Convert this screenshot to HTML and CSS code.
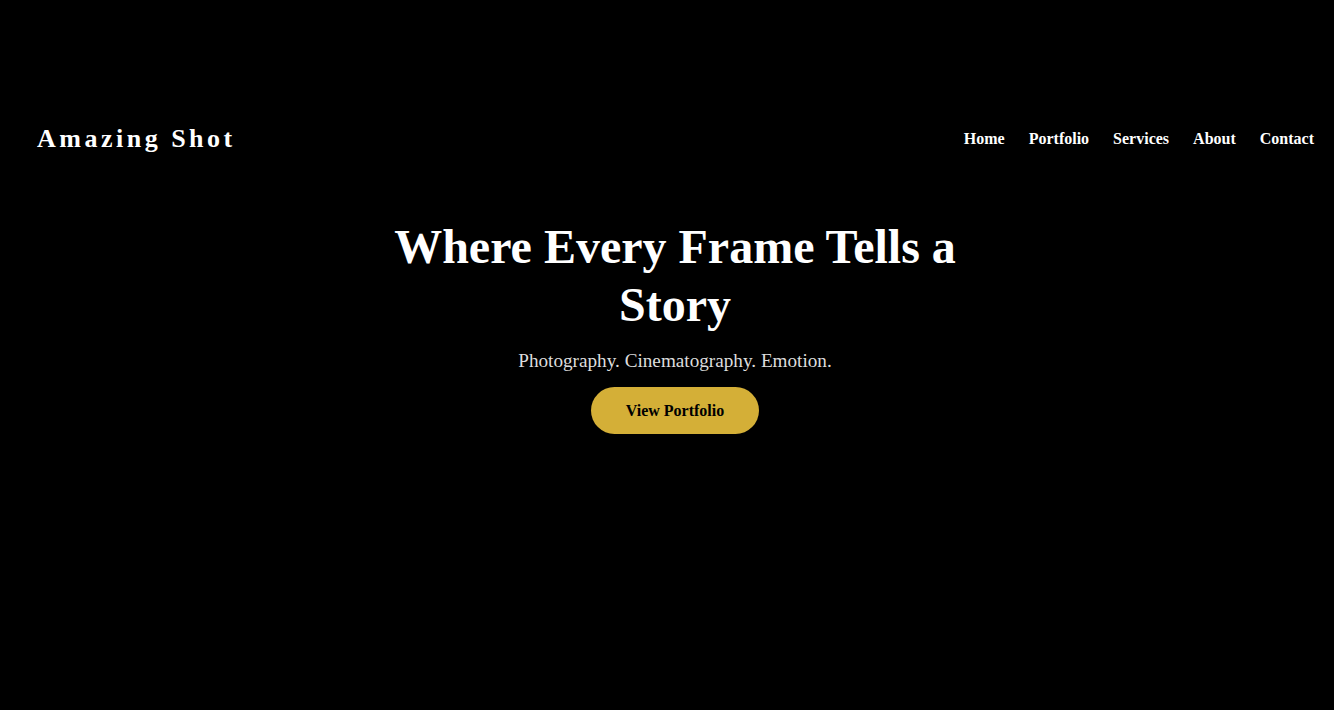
FILE: index.html
```html
<!DOCTYPE html>
<html lang="en">
<head>
<meta charset="utf-8">
<title>Amazing Shot</title>
<link rel="stylesheet" href="styles.css">
</head>
<body>
<div class="page">
  <header class="site-header">
    <div class="logo">Amazing Shot</div>
    <nav class="nav">
      <a href="#">Home</a>
      <a href="#">Portfolio</a>
      <a href="#">Services</a>
      <a href="#">About</a>
      <a href="#">Contact</a>
    </nav>
  </header>
  <section class="hero">
    <h1 class="hero-title">Where Every Frame Tells a Story</h1>
    <p class="hero-sub">Photography. Cinematography. Emotion.</p>
    <a class="btn" href="#">View Portfolio</a>
  </section>
</div>
</body>
</html>
```
FILE: styles.css
```css
html, body {
  margin: 0;
  padding: 0;
  background: #000;
  height: 100%;
}
body {
  font-family: "Liberation Serif", "Times New Roman", serif;
  color: #fff;
}
.page {
  padding-top: 104px;
}
.site-header {
  display: flex;
  justify-content: space-between;
  align-items: center;
  padding: 20px 20px 20px 37px;
}
.logo {
  font-size: 26px;
  font-weight: bold;
  letter-spacing: 3.5px;
}
.nav {
  display: flex;
  gap: 24px;
}
.nav a {
  color: #fff;
  text-decoration: none;
  font-weight: bold;
  font-size: 16px;
}
.hero {
  display: flex;
  flex-direction: column;
  align-items: center;
  text-align: center;
  padding-left: 16px;
  padding-top: 44px;
}
.hero-title {
  max-width: 600px;
  margin: 0;
  font-size: 48px;
  line-height: 1.2;
  font-weight: bold;
}
.hero-sub {
  margin: 17px 0 0;
  font-size: 19.2px;
  color: #ddd;
}
.btn {
  margin-top: 15px;
  display: inline-block;
  background: #d4af37;
  color: #000;
  text-decoration: none;
  font-weight: bold;
  font-size: 16px;
  padding: 14.5px 35px;
  border-radius: 25px;
}
```
